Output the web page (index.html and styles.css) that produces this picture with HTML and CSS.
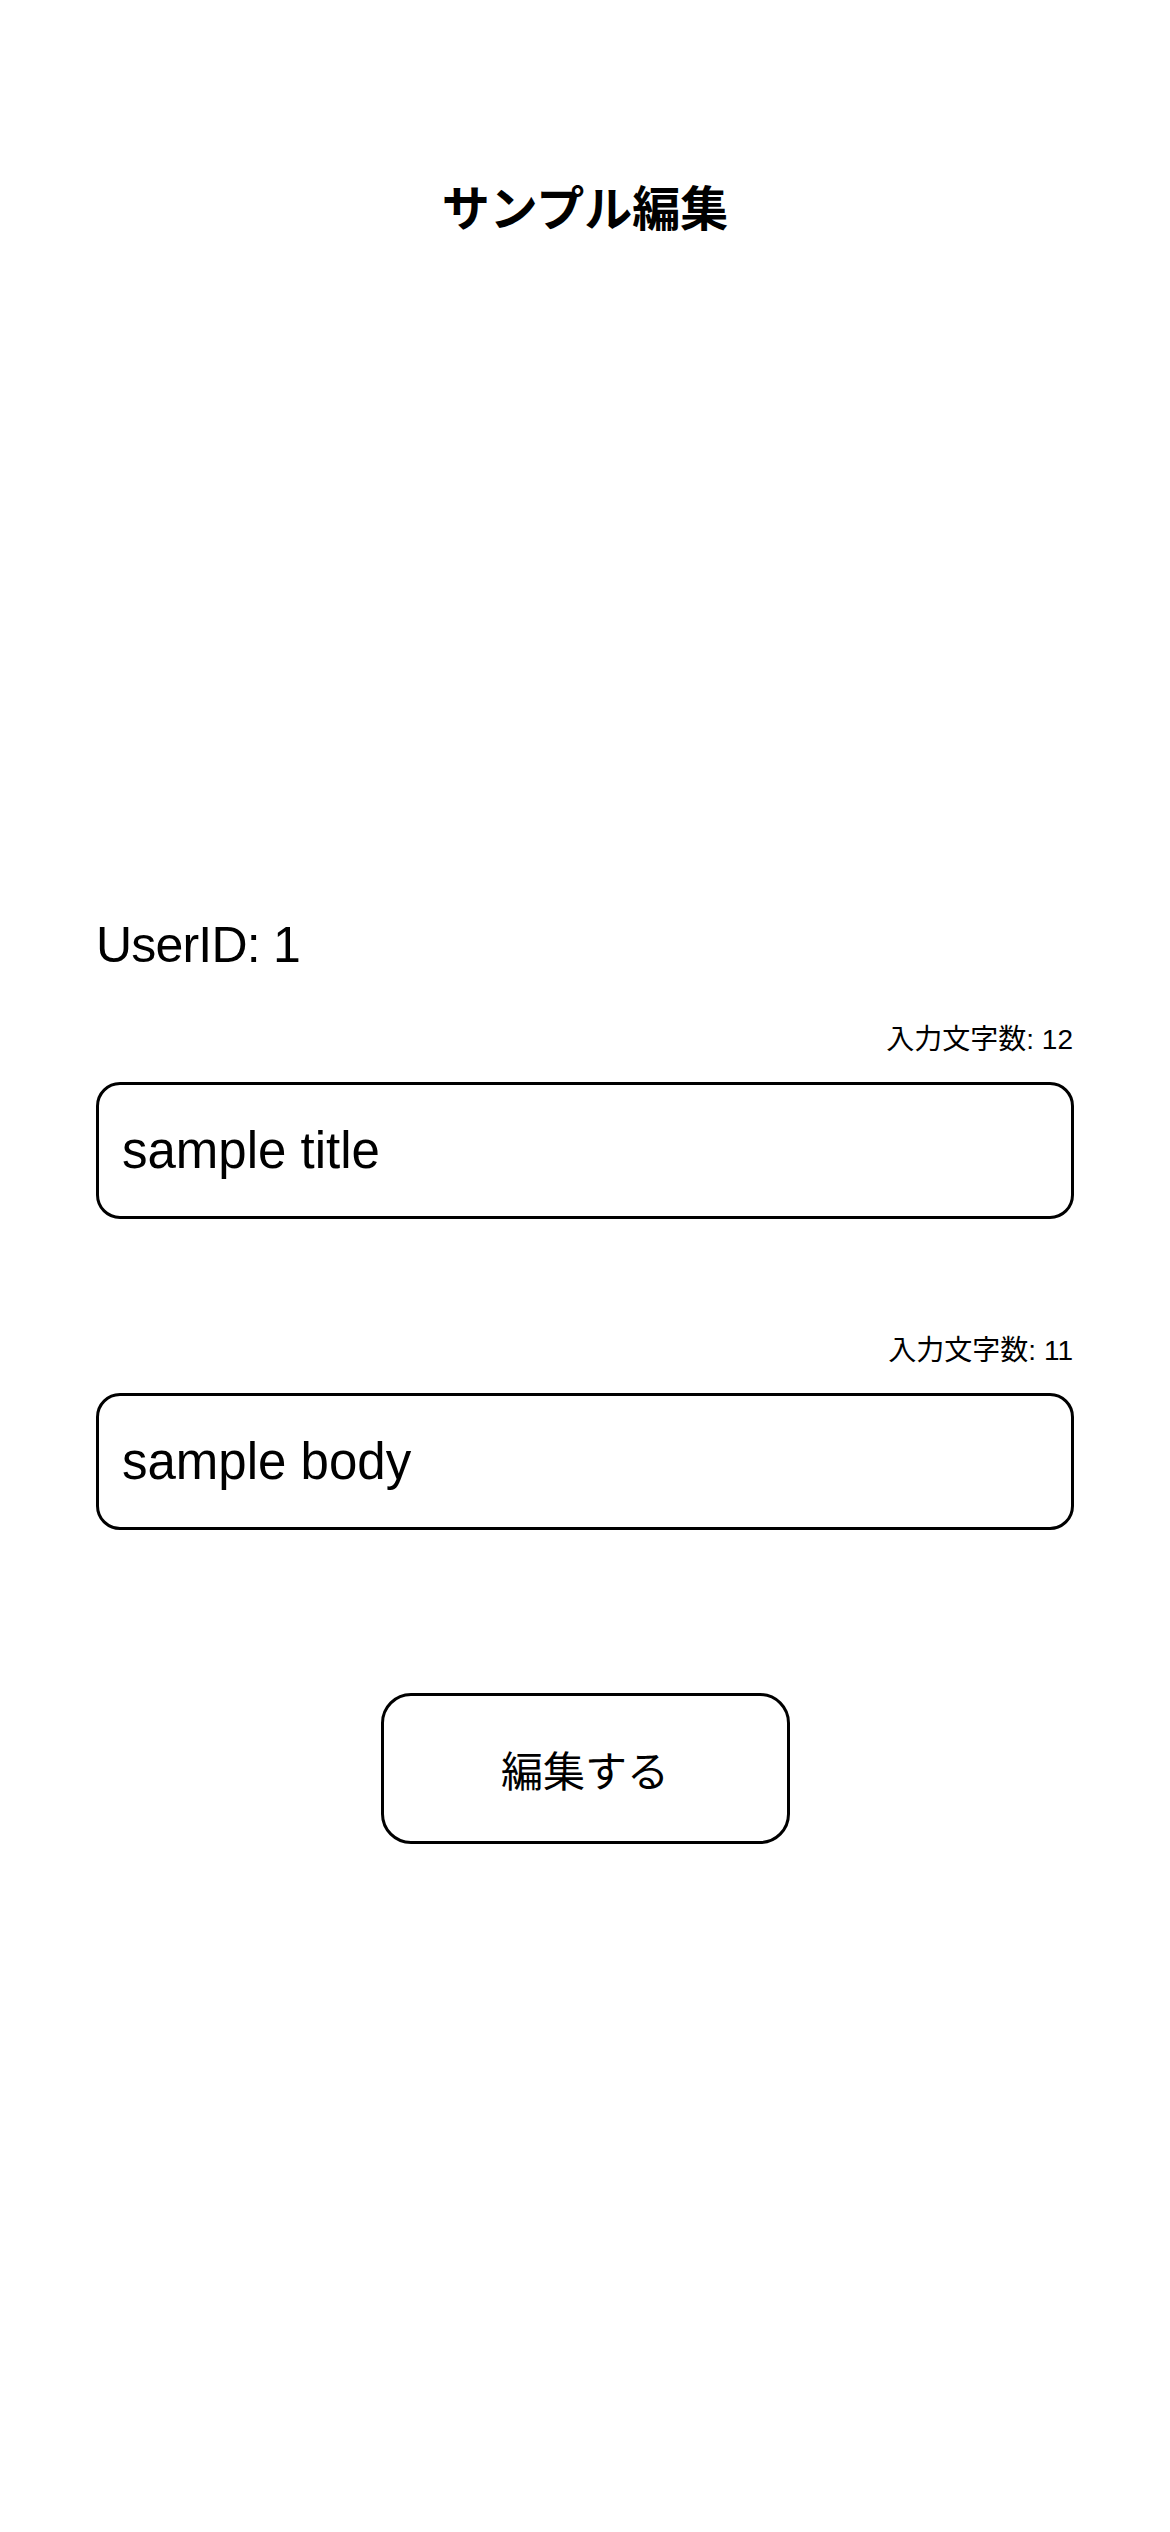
FILE: index.html
```html
<!DOCTYPE html>
<html lang="ja">
<head>
<meta charset="utf-8">
<title>サンプル編集</title>
<link rel="stylesheet" href="styles.css">
</head>
<body>
<main class="page">
  <h1 class="title">サンプル編集</h1>
  <form class="form">
    <p class="user">UserID: 1</p>
    <p class="count">入力文字数: 12</p>
    <input class="field" type="text" value="sample title">
    <p class="count count-second">入力文字数: 11</p>
    <input class="field" type="text" value="sample body">
    <button class="submit" type="button">編集する</button>
  </form>
</main>
</body>
</html>
```
FILE: styles.css
```css
html, body {
  margin: 0;
  padding: 0;
  background: #ffffff;
  color: #000000;
}

body {
  font-family: "Liberation Sans", "Noto Sans CJK JP", sans-serif;
}

.page {
  padding: 0 96px;
}

.title {
  margin: 0;
  padding-top: 181px;
  font-family: "Noto Sans CJK JP", sans-serif;
  font-size: 48px;
  line-height: 48px;
  font-weight: 700;
  text-align: center;
}

.form {
  display: flex;
  flex-direction: column;
  margin: 0;
}

.user {
  margin: 686px 0 0 0;
  font-size: 50px;
  line-height: 60px;
  letter-spacing: -0.8px;
}

.count {
  margin: 48px 0 0 0;
  padding-right: 1px;
  font-size: 28px;
  line-height: 34px;
  text-align: right;
}

.count-second {
  margin-top: 115px;
}

.field {
  margin: 25px 0 0 0;
  box-sizing: border-box;
  width: 100%;
  height: 137px;
  padding: 0 23px;
  border: 3px solid #000000;
  border-radius: 24px;
  background: #ffffff;
  color: #000000;
  font-family: "Liberation Sans", sans-serif;
  font-size: 51px;
  outline: none;
}

.submit {
  align-self: center;
  margin-top: 163px;
  box-sizing: border-box;
  width: 409px;
  height: 151px;
  border: 3px solid #000000;
  border-radius: 30px;
  background: #ffffff;
  color: #000000;
  font-family: "Noto Sans CJK JP", sans-serif;
  font-size: 42px;
  font-weight: 400;
  padding: 0;
}
```
